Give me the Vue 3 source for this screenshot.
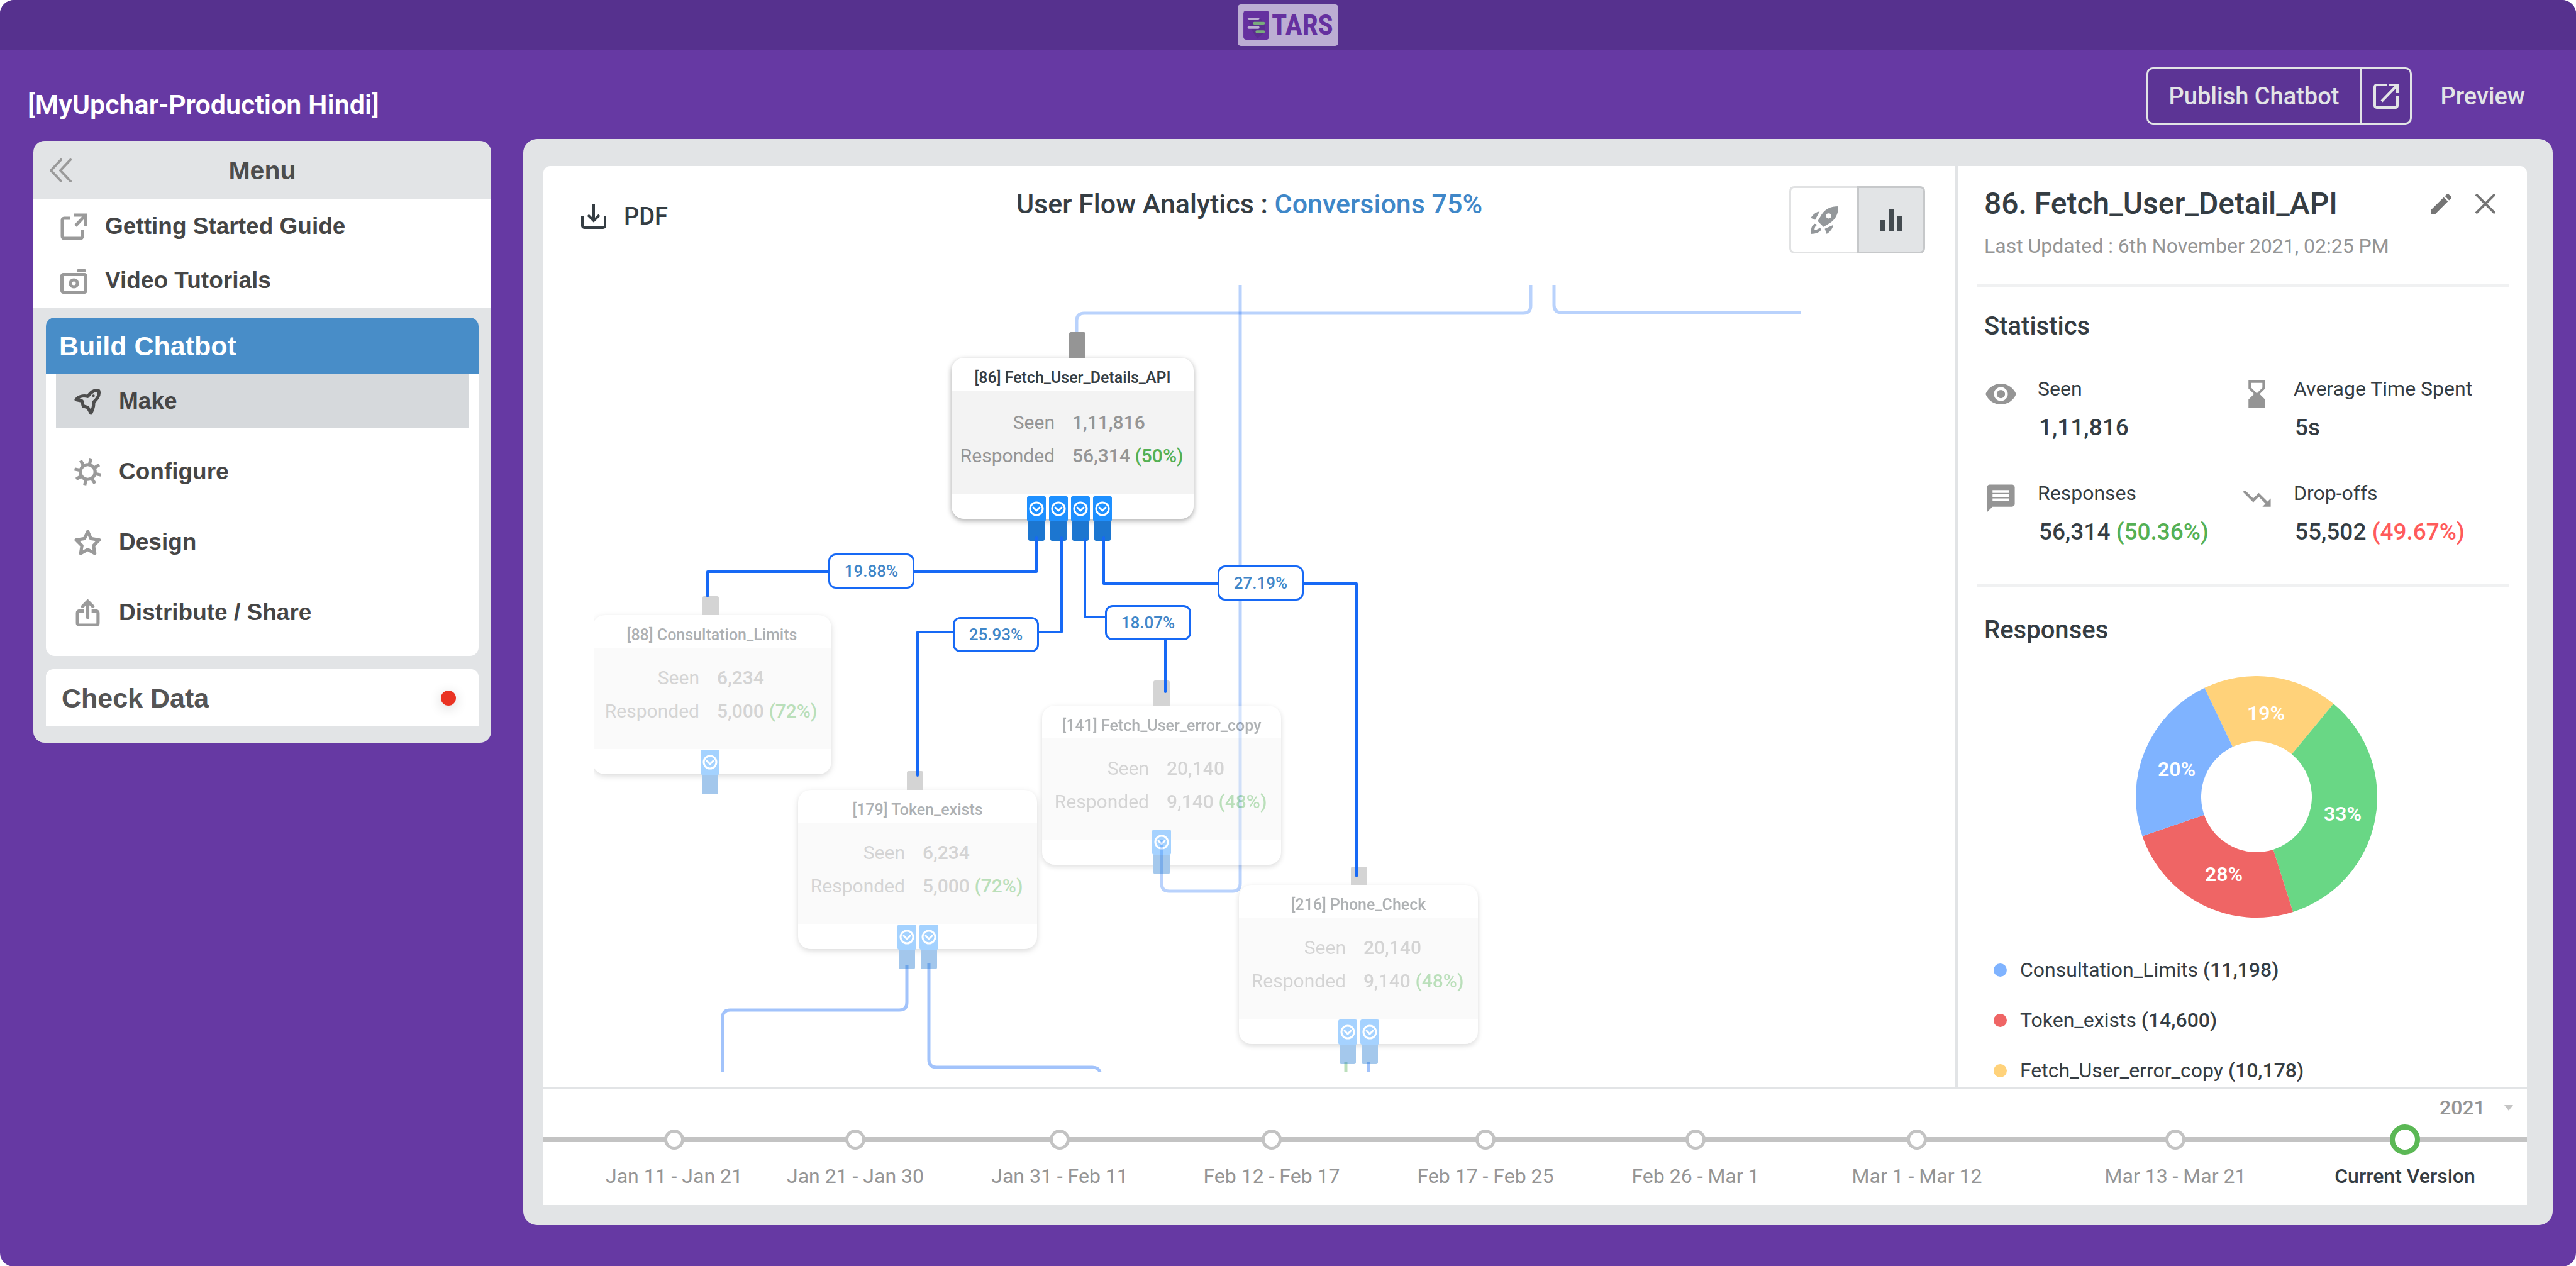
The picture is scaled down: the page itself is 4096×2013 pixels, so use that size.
<script setup>
import { ref } from 'vue'

const year = ref('2021')

const menu = [
  { label: 'Make', icon: 'rocket', active: true },
  { label: 'Configure', icon: 'gear' },
  { label: 'Design', icon: 'star' },
  { label: 'Distribute / Share', icon: 'share' },
]

const nodes = [
  { id: 86, title: '[86] Fetch_User_Details_API', x: 569, y: 116, seen: '1,11,816', responded: '56,314', rate: '(50%)', stub: { x: 187, h: 41 }, ports: { x: 120, y: 220, count: 4 }, focus: true },
  { id: 88, title: '[88] Consultation_Limits', x: -2, y: 525, seen: '6,234', responded: '5,000', rate: '(72%)', stub: { x: 175, h: 30 }, ports: { x: 172, y: 214, count: 1 } },
  { id: 179, title: '[179] Token_exists', x: 325, y: 803, seen: '6,234', responded: '5,000', rate: '(72%)', stub: { x: 173, h: 30 }, ports: { x: 158, y: 214, count: 2 } },
  { id: 141, title: '[141] Fetch_User_error_copy', x: 713, y: 669, seen: '20,140', responded: '9,140', rate: '(48%)', stub: { x: 177, h: 40 }, ports: { x: 175, y: 197, count: 1 } },
  { id: 216, title: '[216] Phone_Check', x: 1026, y: 954, seen: '20,140', responded: '9,140', rate: '(48%)', stub: { x: 178, h: 29 }, ports: { x: 158, y: 214, count: 2 } },
]

const shares = [
  { text: '19.88%', x: 373, y: 427 },
  { text: '25.93%', x: 571, y: 528 },
  { text: '18.07%', x: 813, y: 509 },
  { text: '27.19%', x: 992, y: 446 },
]

// Slice angles are degrees clockwise from the top of the ring.
const slices = [
  { from: -25.5, to: 39.6, color: '#ffd27a', label: '19%', x: 207, y: 59 },
  { from: 39.6, to: 162.4, color: '#69d785', label: '33%', x: 329, y: 219 },
  { from: 162.4, to: 251, color: '#ef6565', label: '28%', x: 140, y: 315 },
  { from: 251, to: 334.5, color: '#7fb3ff', label: '20%', x: 65, y: 148 },
]

const point = (deg, r) => {
  const a = (deg * Math.PI) / 180
  return `${192 + r * Math.sin(a)} ${192 - r * Math.cos(a)}`
}
const slicePath = (s) =>
  `M${point(s.from, 192)}A192 192 0 0 1 ${point(s.to, 192)}L${point(s.to, 88)}A88 88 0 0 0 ${point(s.from, 88)}Z`

const legend = [
  { name: 'Consultation_Limits', count: '(11,198)', color: '#7fb3ff' },
  { name: 'Token_exists', count: '(14,600)', color: '#ef6565' },
  { name: 'Fetch_User_error_copy', count: '(10,178)', color: '#ffd27a' },
]

// gap: share of the track between this version and the one before it
const versions = [
  { label: 'Jan 11 - Jan 21', gap: 208 },
  { label: 'Jan 21 - Jan 30', gap: 288 },
  { label: 'Jan 31 - Feb 11', gap: 325 },
  { label: 'Feb 12 - Feb 17', gap: 337 },
  { label: 'Feb 17 - Feb 25', gap: 340 },
  { label: 'Feb 26 - Mar 1', gap: 334 },
  { label: 'Mar 1 - Mar 12', gap: 352 },
  { label: 'Mar 13 - Mar 21', gap: 411 },
  { label: 'Current Version', gap: 365, current: true },
]
const trackColumns = versions.map((v) => `minmax(0, ${v.gap}fr)`).join(' ') + ' minmax(0, 194fr)'
</script>

<template>
  <div class="app">
    <header class="topbar">
      <div class="logo">
        <svg class="logo-mark" viewBox="0 0 184 207" aria-hidden="true">
          <rect width="184" height="207" rx="20" fill="#65309f" />
          <path d="M34 62L114 50 154 96 154 152 100 200 60 140Z" fill="#5b2d90" />
          <rect x="30" y="49" width="85" height="19" rx="9" fill="#bcaed3" />
          <rect x="69" y="80" width="85" height="19" rx="9" fill="#79ab7c" />
          <rect x="30" y="110" width="85" height="19" rx="9" fill="#bcaed3" />
          <rect x="87" y="141" width="67" height="19" rx="9" fill="#79ab7c" />
        </svg>
        <span class="logo-text">TARS</span>
      </div>
    </header>

    <div class="titlebar">
      <h1>[MyUpchar-Production Hindi]</h1>
      <div class="actions">
        <div class="publish">
          <button type="button" class="publish-main">Publish Chatbot</button>
          <button type="button" class="publish-open" aria-label="Open chatbot">
            <svg viewBox="0 0 40 40" fill="none" stroke="currentColor" stroke-width="4">
              <path d="M21 2H5a3 3 0 0 0-3 3v30a3 3 0 0 0 3 3h30a3 3 0 0 0 3-3V20" />
              <path d="M25 2h13v13M38 2L13 28" />
            </svg>
          </button>
        </div>
        <a href="#" class="preview">Preview</a>
      </div>
    </div>

    <div class="workspace">
      <nav class="sidebar">
        <div class="menu-head">
          <button type="button" class="collapse" aria-label="Collapse menu">
            <svg viewBox="0 0 36 38" fill="none" stroke="currentColor" stroke-width="4" stroke-linecap="round" stroke-linejoin="round">
              <path d="M19 2L3 19l16 17M34 2L18 19l16 17" />
            </svg>
          </button>
          <h2>Menu</h2>
        </div>
        <div class="guides">
          <a href="#">
            <svg class="menu-icon" viewBox="0 0 43 43" fill="none" stroke="currentColor" stroke-width="5">
              <path d="M16 8H6a3 3 0 0 0-3 3v26a3 3 0 0 0 3 3h26a3 3 0 0 0 3-3V27" />
              <path d="M22 3h18v18M40 3L24 20" />
            </svg>
            Getting Started Guide
          </a>
          <a href="#">
            <svg class="menu-icon" viewBox="0 0 43 43">
              <rect x="2.5" y="11.5" width="38" height="28" rx="2" fill="none" stroke="currentColor" stroke-width="5" />
              <path d="M27 7V4q0-2 2-2h9q2 0 2 2v3z" fill="currentColor" />
              <circle cx="21.5" cy="25.5" r="5.5" fill="none" stroke="currentColor" stroke-width="5" />
            </svg>
            Video Tutorials
          </a>
        </div>
        <section class="build">
          <h3>Build Chatbot</h3>
          <ul>
            <li v-for="item in menu" :key="item.label">
              <a href="#" :class="{ active: item.active }">
                <svg v-if="item.icon === 'rocket'" class="menu-icon" viewBox="0 0 42 42" fill="none" stroke="currentColor" stroke-width="5" stroke-linejoin="round">
                  <path d="M38 4C31 2 26 6 21 13 14 11 7 13 3 18L12 20 14 28 21 30 26 39C29 33 31 28 30 22 36 17 40 11 38 4Z" />
                  <circle cx="30" cy="12" r="2" fill="currentColor" stroke="none" />
                </svg>
                <svg v-else-if="item.icon === 'gear'" class="menu-icon" viewBox="-21 -21 42 42" fill="none" stroke="currentColor" stroke-width="5">
                  <circle r="11.5" />
                  <path v-for="n in 8" :key="n" d="M0-12V-21" :transform="`rotate(${n * 45 + 13})`" />
                </svg>
                <svg v-else-if="item.icon === 'star'" class="menu-icon" viewBox="0 0 42 42" fill="none" stroke="currentColor" stroke-width="5" stroke-linejoin="round">
                  <path d="M21 4L26 15 39 17 30 26 32 38 21 32 10 38 12 26 3 17 16 15Z" />
                </svg>
                <svg v-else class="menu-icon" viewBox="0 0 42 42" fill="none" stroke="currentColor" stroke-width="5">
                  <path d="M15 18H8a3 3 0 0 0-3 3v16a3 3 0 0 0 3 3h26a3 3 0 0 0 3-3V21a3 3 0 0 0-3-3h-7" />
                  <path d="M21 28V4M13 11l8-8 8 8" stroke-linecap="round" />
                </svg>
                {{ item.label }}
              </a>
            </li>
          </ul>
        </section>
        <a href="#" class="check">Check Data<span class="alert"></span></a>
      </nav>

      <main class="panel">
        <div class="upper">
          <section class="flow">
            <div class="flow-head">
              <button type="button" class="pdf">
                <svg viewBox="0 0 40 40" fill="none" stroke="currentColor" stroke-width="4">
                  <path d="M2 20v15a3 3 0 0 0 3 3h30a3 3 0 0 0 3-3V20M20 0v27M11 18l9 9 9-9" />
                </svg>
                PDF
              </button>
              <h2>User Flow Analytics : <a href="#">Conversions 75%</a></h2>
              <div class="toggle">
                <button type="button" aria-label="Flow view">
                  <svg width="44" height="44" viewBox="0 0 43 43" fill="currentColor">
                    <path fill-rule="evenodd" d="M43 0C31 0 23 4 17 13L11 23 20 32 30 26C39 20 43 12 43 0ZM28 11a4 4 0 1 1 0 8 4 4 0 0 1 0-8Z" />
                    <path d="M14 8Q6 9 0 18L7 21ZM35 29Q34 37 25 43L22 35ZM0 43Q0 30 6 27 9 27 10 29 6 31 6 37 12 36 14 33 16 34 16 37 13 43 0 43Z" />
                  </svg>
                </button>
                <button type="button" class="on" aria-label="Analytics view" aria-pressed="true">
                  <svg width="36" height="36" viewBox="0 0 36 36" fill="currentColor">
                    <path d="M0 18h8v18H0zM14 0h8v36h-8zM28 11h8v25h-8z" />
                  </svg>
                </button>
              </div>
            </div>

            <div class="canvas">
              <svg class="links" fill="none" stroke-width="5" aria-hidden="true">
                <g stroke="#1769f5">
                  <path opacity="0.3" d="M768 75V57q0-12 12-12H1478q12 0 12-12V0" />
                  <path opacity="0.3" d="M1527 0V32q0 12 12 12H1920" />
                  <path opacity="0.3" d="M1028 0V952q0 12-12 12H915q-12 0-12-12V882" />
                  <path opacity="0.4" d="M498 1082V1141q0 12-12 12H217q-12 0-12 12V1260" />
                  <path opacity="0.4" d="M533 1078V1232q0 12 12 12H793q12 0 13 12V1260" />
                  <path opacity="0.4" d="M1232 1236V1260" />
                </g>
                <path opacity="0.4" stroke="#54b054" d="M1196 1236V1260" />
              </svg>

              <article v-for="n in nodes" :key="n.id" class="node" :class="{ focus: n.focus }" :style="{ left: n.x + 'px', top: n.y + 'px' }">
                <span class="stub" :style="{ left: n.stub.x + 'px', top: -n.stub.h + 'px', height: n.stub.h + 'px' }"></span>
                <div class="card">
                  <h3>{{ n.title }}</h3>
                  <dl>
                    <dt>Seen</dt>
                    <dd>{{ n.seen }}</dd>
                    <dt>Responded</dt>
                    <dd>{{ n.responded }} <span>{{ n.rate }}</span></dd>
                  </dl>
                </div>
                <div class="ports" :style="{ left: n.ports.x + 'px', top: n.ports.y + 'px' }">
                  <svg v-for="p in n.ports.count" :key="p" width="30" height="71" viewBox="0 0 30 71">
                    <rect x="2" y="38" width="26" height="33" rx="3" fill="#1c76d0" />
                    <rect width="30" height="40" rx="3" fill="#1e90ff" />
                    <circle cx="15" cy="20" r="10" fill="none" stroke="#fff" stroke-width="3" />
                    <path d="M10 18l5 5 5-5" fill="none" stroke="#fff" stroke-width="3" stroke-linecap="round" stroke-linejoin="round" />
                  </svg>
                </div>
              </article>

              <svg class="links" fill="none" stroke="#1769f5" stroke-width="4" stroke-linejoin="round" stroke-linecap="round" aria-hidden="true">
                <path d="M704 402V456H181V495" />
                <path d="M744 402V552H515V780" />
                <path d="M781 405V528H909V647" />
                <path d="M811 402V475H1213V940" />
              </svg>
              <span v-for="s in shares" :key="s.text" class="share" :style="{ left: s.x + 'px', top: s.y + 'px' }">{{ s.text }}</span>
            </div>
          </section>

          <aside class="detail">
            <div class="detail-head">
              <h2>86. Fetch_User_Detail_API</h2>
              <button type="button" aria-label="Edit">
                <svg viewBox="3 3 18 18" fill="currentColor">
                  <path d="M3 17.25V21h3.75L17.81 9.94l-3.75-3.75L3 17.25zM20.71 7.04c.39-.39.39-1.02 0-1.41l-2.34-2.34c-.39-.39-1.02-.39-1.41 0l-1.83 1.83 3.75 3.75 1.83-1.83z" />
                </svg>
              </button>
              <button type="button" aria-label="Close">
                <svg viewBox="0 0 32 32" fill="none" stroke="currentColor" stroke-width="4">
                  <path d="M1 1l30 30M31 1L1 31" />
                </svg>
              </button>
            </div>
            <p class="updated">Last Updated : 6th November 2021, 02:25 PM</p>
            <hr />
            <h3>Statistics</h3>
            <div class="stats">
              <div class="stat">
                <svg viewBox="0 0 24 24"><path d="M12 4.5C7 4.5 2.73 7.61 1 12c1.73 4.39 6 7.5 11 7.5s9.27-3.11 11-7.5c-1.73-4.39-6-7.5-11-7.5zM12 17c-2.76 0-5-2.24-5-5s2.24-5 5-5 5 2.24 5 5-2.24 5-5 5zm0-8c-1.66 0-3 1.34-3 3s1.34 3 3 3 3-1.34 3-3-1.34-3-3-3z" /></svg>
                <p>Seen</p>
                <strong>1,11,816</strong>
              </div>
              <div class="stat">
                <svg viewBox="0 0 24 24"><path d="M18 22l-.01-6L14 12l3.99-4.01L18 2H6v6l4 4-4 3.99V22h12zM8 7.5V4h8v3.5l-4 4-4-4z" /></svg>
                <p>Average Time Spent</p>
                <strong>5s</strong>
              </div>
              <div class="stat">
                <svg viewBox="0 0 24 24"><path d="M20 2H4c-1.1 0-1.99.9-1.99 2L2 22l4-4h14c1.1 0 2-.9 2-2V4c0-1.1-.9-2-2-2zm-2 12H6v-2h12v2zm0-3H6V9h12v2zm0-3H6V6h12v2z" /></svg>
                <p>Responses</p>
                <strong>56,314 <span class="good">(50.36%)</span></strong>
              </div>
              <div class="stat">
                <svg viewBox="0 0 24 24"><path d="M16 18l2.29-2.29-4.88-4.88-4 4L2 7.41 3.41 6l6 6 4-4 6.3 6.29L22 12v6z" /></svg>
                <p>Drop-offs</p>
                <strong>55,502 <span class="bad">(49.67%)</span></strong>
              </div>
            </div>
            <hr />
            <h3 class="chart-title">Responses</h3>
            <svg class="donut" viewBox="0 0 384 384" role="img" aria-label="Responses by next block">
              <path v-for="s in slices" :key="s.label" :d="slicePath(s)" :fill="s.color" />
              <text v-for="s in slices" :key="s.color" :x="s.x" :y="s.y + 11">{{ s.label }}</text>
            </svg>
            <ul class="legend">
              <li v-for="l in legend" :key="l.name">
                <i :style="{ background: l.color }"></i>
                <span>{{ l.name }} <b>{{ l.count }}</b></span>
              </li>
            </ul>
          </aside>
        </div>

        <footer class="timeline">
          <label class="year">
            <select v-model="year" aria-label="Year">
              <option>2021</option>
            </select>
            <svg width="14" height="9" viewBox="0 0 14 9"><path d="M0 0h14L7 9z" fill="#c4c4c4" /></svg>
          </label>
          <ol :style="{ gridTemplateColumns: trackColumns }">
            <li v-for="v in versions" :key="v.label" :class="{ current: v.current }">
              <span class="dot"></span>
              <span>{{ v.label }}</span>
            </li>
          </ol>
        </footer>
      </main>
    </div>
  </div>
</template>

<style>
body {
  margin: 0;
  background: #fff;
}
</style>

<style scoped>
.app {
  box-sizing: border-box;
  min-height: 100vh;
  display: flex;
  flex-direction: column;
  overflow: hidden;
  border-radius: 22px;
  background: #6639a3;
  color: #353d43;
  font-family: Roboto, "Liberation Sans", sans-serif;
  font-size: 32px;
  line-height: 40px;
}
.app * {
  box-sizing: border-box;
}
h1, h2, h3, p, ul, ol, dl, dd {
  margin: 0;
  padding: 0;
}
h1, h2, h3 {
  font-weight: 500;
}
ul, ol {
  list-style: none;
}
button {
  padding: 0;
  border: 0;
  background: none;
  color: inherit;
  font: inherit;
  cursor: pointer;
}
a {
  color: inherit;
  text-decoration: none;
}
svg {
  display: block;
  flex: none;
}

.topbar {
  height: 80px;
  display: flex;
  justify-content: center;
  align-items: center;
  background: #56318e;
}
.logo {
  width: 160px;
  height: 66px;
  display: flex;
  align-items: center;
  gap: 4px;
  padding-left: 9px;
  border-radius: 5px;
  background: #bcaed3;
}
.logo-mark {
  width: 41px;
  height: 46px;
}
.logo-text {
  color: #65309f;
  font: 700 45px/66px "Liberation Sans Narrow", "Roboto Condensed", "DejaVu Sans Condensed", sans-serif;
}

.titlebar {
  display: flex;
  justify-content: space-between;
  align-items: flex-end;
  padding: 27px 81px 23px 44px;
  color: #fff;
}
h1 {
  font-size: 43px;
  line-height: 64px;
  font-weight: 600;
}
.actions {
  display: flex;
  align-items: center;
  gap: 45px;
  color: #e2e4e6;
  font-size: 38px;
  font-weight: 500;
}
.publish {
  height: 91px;
  display: flex;
  border: 3px solid #e2e4e6;
  border-radius: 10px;
  background: #5c3495;
}
.publish-main {
  padding: 0 33px;
}
.publish-open {
  width: 80px;
  display: grid;
  place-items: center;
  border-left: 3px solid #e2e4e6;
}
.publish-open svg {
  width: 40px;
}

.workspace {
  flex: 1;
  display: grid;
  grid-template-columns: 728px minmax(0, 1fr);
  gap: 51px;
  padding: 0 37px 66px 53px;
}
.sidebar {
  align-self: start;
  margin-top: 3px;
  padding-bottom: 26px;
  border-radius: 18px;
  background: #e2e4e6;
  color: #464646;
  font-family: "Liberation Sans", sans-serif;
  font-size: 37px;
  font-weight: 700;
}
.sidebar h2,
.sidebar h3 {
  font-weight: 700;
}
.menu-head {
  height: 93px;
  display: grid;
  grid-template-columns: 90px 1fr 90px;
  align-items: center;
}
.menu-head h2 {
  color: #4d4d4d;
  font-size: 41px;
  text-align: center;
}
.collapse {
  padding-left: 25px;
  color: #9a9a9a;
}
.collapse svg {
  width: 36px;
}
.guides {
  background: #fff;
}
.guides a {
  height: 86px;
  display: flex;
  align-items: center;
  gap: 28px;
  padding-left: 43px;
}
.menu-icon {
  width: 43px;
  height: 43px;
  color: #9a9a9a;
}
.build {
  margin: 16px 20px 21px;
  padding-bottom: 26px;
  overflow: hidden;
  border-radius: 14px;
  background: #fff;
}
.build h3 {
  padding-left: 21px;
  background: #488dc8;
  color: #fff;
  font-size: 43px;
  line-height: 90px;
}
.build ul {
  display: grid;
  gap: 26px;
  padding: 0 16px;
}
.build a {
  height: 86px;
  display: flex;
  align-items: center;
  gap: 28px;
  padding-left: 29px;
}
.build .active {
  background: #d6d9dc;
}
.active .menu-icon {
  color: #4d4d4d;
}
.check {
  height: 91px;
  display: flex;
  justify-content: space-between;
  align-items: center;
  margin: 0 20px;
  padding: 0 36px 0 25px;
  border-radius: 12px 12px 0 0;
  background: #fff;
  color: #555;
  font-size: 43px;
}
.alert {
  width: 24px;
  height: 24px;
  border-radius: 50%;
  background: #ea3323;
  box-shadow: 0 4px 20px rgba(0, 0, 0, 0.16);
}

.panel {
  display: flex;
  flex-direction: column;
  padding: 43px 41px 32px 32px;
  border-radius: 22px;
  background: #e2e4e6;
}
.upper {
  flex: 1;
  display: grid;
  grid-template-columns: minmax(0, 1fr) 909px;
  border-radius: 11px 11px 0 0;
  background: #fff;
}
.flow {
  display: flex;
  flex-direction: column;
}
.flow-head {
  display: grid;
  grid-template-columns: 1fr auto 1fr;
  align-items: start;
  padding: 32px 48px 50px;
}
.flow-head h2 {
  font-size: 43px;
  line-height: 56px;
}
.flow-head h2 a {
  color: #3f87c8;
}
.pdf {
  height: 96px;
  display: flex;
  align-items: center;
  justify-self: start;
  gap: 28px;
  padding-left: 12px;
  font-size: 38px;
  font-weight: 500;
}
.pdf svg {
  width: 40px;
}
.toggle {
  width: 216px;
  height: 107px;
  display: grid;
  grid-template-columns: 1fr 1fr;
  justify-self: end;
}
.toggle button {
  display: grid;
  place-items: center;
  border: 3px solid #e1e2e3;
  border-right: 0;
  border-radius: 8px 0 0 8px;
  color: #94989b;
}
.toggle .on {
  border: 3px solid #c6c8ca;
  border-radius: 0 8px 8px 0;
  background: #e2e4e6;
  color: #444b50;
}

.canvas {
  position: relative;
  flex: 1;
  margin: 0 0 24px 80px;
  overflow: hidden;
}
.links {
  position: absolute;
  inset: 0;
  width: 100%;
  height: 100%;
}
.node {
  position: absolute;
  width: 380px;
  opacity: 0.4;
}
.node.focus {
  width: 385px;
  opacity: 1;
}
.stub {
  position: absolute;
  width: 26px;
  border-radius: 3px 3px 0 0;
  background: #959595;
}
.card {
  padding-bottom: 40px;
  overflow: hidden;
  border-radius: 20px;
  background: #fff;
  box-shadow: 0 3px 8px rgba(0, 0, 0, 0.35);
}
.card h3 {
  height: 52px;
  padding-top: 12px;
  font-size: 25px;
  text-align: center;
}
.card dl {
  height: 161px;
  display: grid;
  grid-template-columns: 170px auto;
  align-content: start;
  gap: 13px 28px;
  padding-top: 28px;
  background: #f3f3f3;
  color: #959595;
  font-size: 30px;
}
.focus dl {
  height: 164px;
  grid-template-columns: 164px auto;
  padding-top: 31px;
}
.card dt {
  text-align: right;
}
.card dd {
  font-weight: 500;
  white-space: nowrap;
}
.card dd span {
  color: #54b054;
}
.ports {
  position: absolute;
  display: flex;
  gap: 5px;
}
.share {
  position: absolute;
  width: 137px;
  border: 3px solid #1769f5;
  border-radius: 12px;
  background: #fff;
  color: #4086c8;
  font-size: 26px;
  font-weight: 500;
  line-height: 50px;
  text-align: center;
}

.detail {
  padding: 28px 29px 7px;
  border-left: 5px solid #e2e4e6;
}
.detail > :not(hr) {
  margin-left: 12px;
}
.detail-head {
  display: flex;
  align-items: center;
  gap: 38px;
  padding-right: 21px;
}
.detail-head h2 {
  flex: 1;
  font-size: 48px;
  line-height: 64px;
}
.detail-head button {
  color: #757575;
}
.detail-head svg {
  width: 32px;
}
.updated {
  margin-top: 15px;
  color: #959595;
}
hr {
  height: 5px;
  margin: 40px 0 39px;
  border: 0;
  background: #f0f1f2;
}
.detail h3 {
  font-size: 40px;
  line-height: 48px;
}
.chart-title {
  margin-top: 45px;
}
.stats {
  display: grid;
  grid-template-columns: 407px 1fr;
  gap: 60px 0;
  margin: 55px 0 58px;
}
.stat {
  display: grid;
  grid-template-columns: 53px 1fr;
  gap: 18px 32px;
}
.stat svg {
  width: 53px;
  height: 53px;
  grid-row: span 2;
  margin-top: 2px;
  fill: #959595;
}
.stat strong {
  padding-left: 2px;
  font-size: 37px;
  font-weight: 500;
  line-height: 48px;
}
.good {
  color: #54b054;
}
.bad {
  color: #ff5b5b;
}
.donut {
  width: 384px;
  margin: 49px 0 63px;
}
.detail > .donut {
  margin-left: 253px;
}
.donut text {
  fill: #fff;
  font-size: 32px;
  font-weight: 600;
  text-anchor: middle;
}
.legend {
  display: grid;
  gap: 40px;
}
.legend li {
  display: flex;
  align-items: center;
  gap: 21px;
  padding-left: 15px;
}
.legend i {
  width: 21px;
  height: 21px;
  border-radius: 50%;
}
.legend b {
  font-weight: 500;
}

.timeline {
  padding: 9px 0 26px;
  border-top: 3px solid #e2e4e6;
  background: #fff;
  color: #959595;
}
.year {
  display: flex;
  justify-content: flex-end;
  align-items: center;
  gap: 30px;
  padding-right: 22px;
}
.year select {
  padding: 0;
  border: 0;
  background: none;
  color: inherit;
  font: inherit;
  font-weight: 500;
  appearance: none;
}
.timeline ol {
  position: relative;
  display: grid;
  margin-top: 7px;
}
.timeline ol::before {
  content: "";
  position: absolute;
  top: 20px;
  width: 100%;
  height: 8px;
  background: #c3c3c3;
}
.timeline li {
  position: relative;
  width: 260px;
  display: grid;
  grid-template-rows: 48px 40px;
  row-gap: 14px;
  justify-self: end;
  place-items: center;
  margin-right: -130px;
}
.dot {
  width: 32px;
  height: 32px;
  border: 5px solid #c3c3c3;
  border-radius: 50%;
  background: #fff;
}
.current {
  color: #353d43;
  font-weight: 500;
}
.current .dot {
  width: 48px;
  height: 48px;
  border: 8px solid #5bb855;
}
</style>
